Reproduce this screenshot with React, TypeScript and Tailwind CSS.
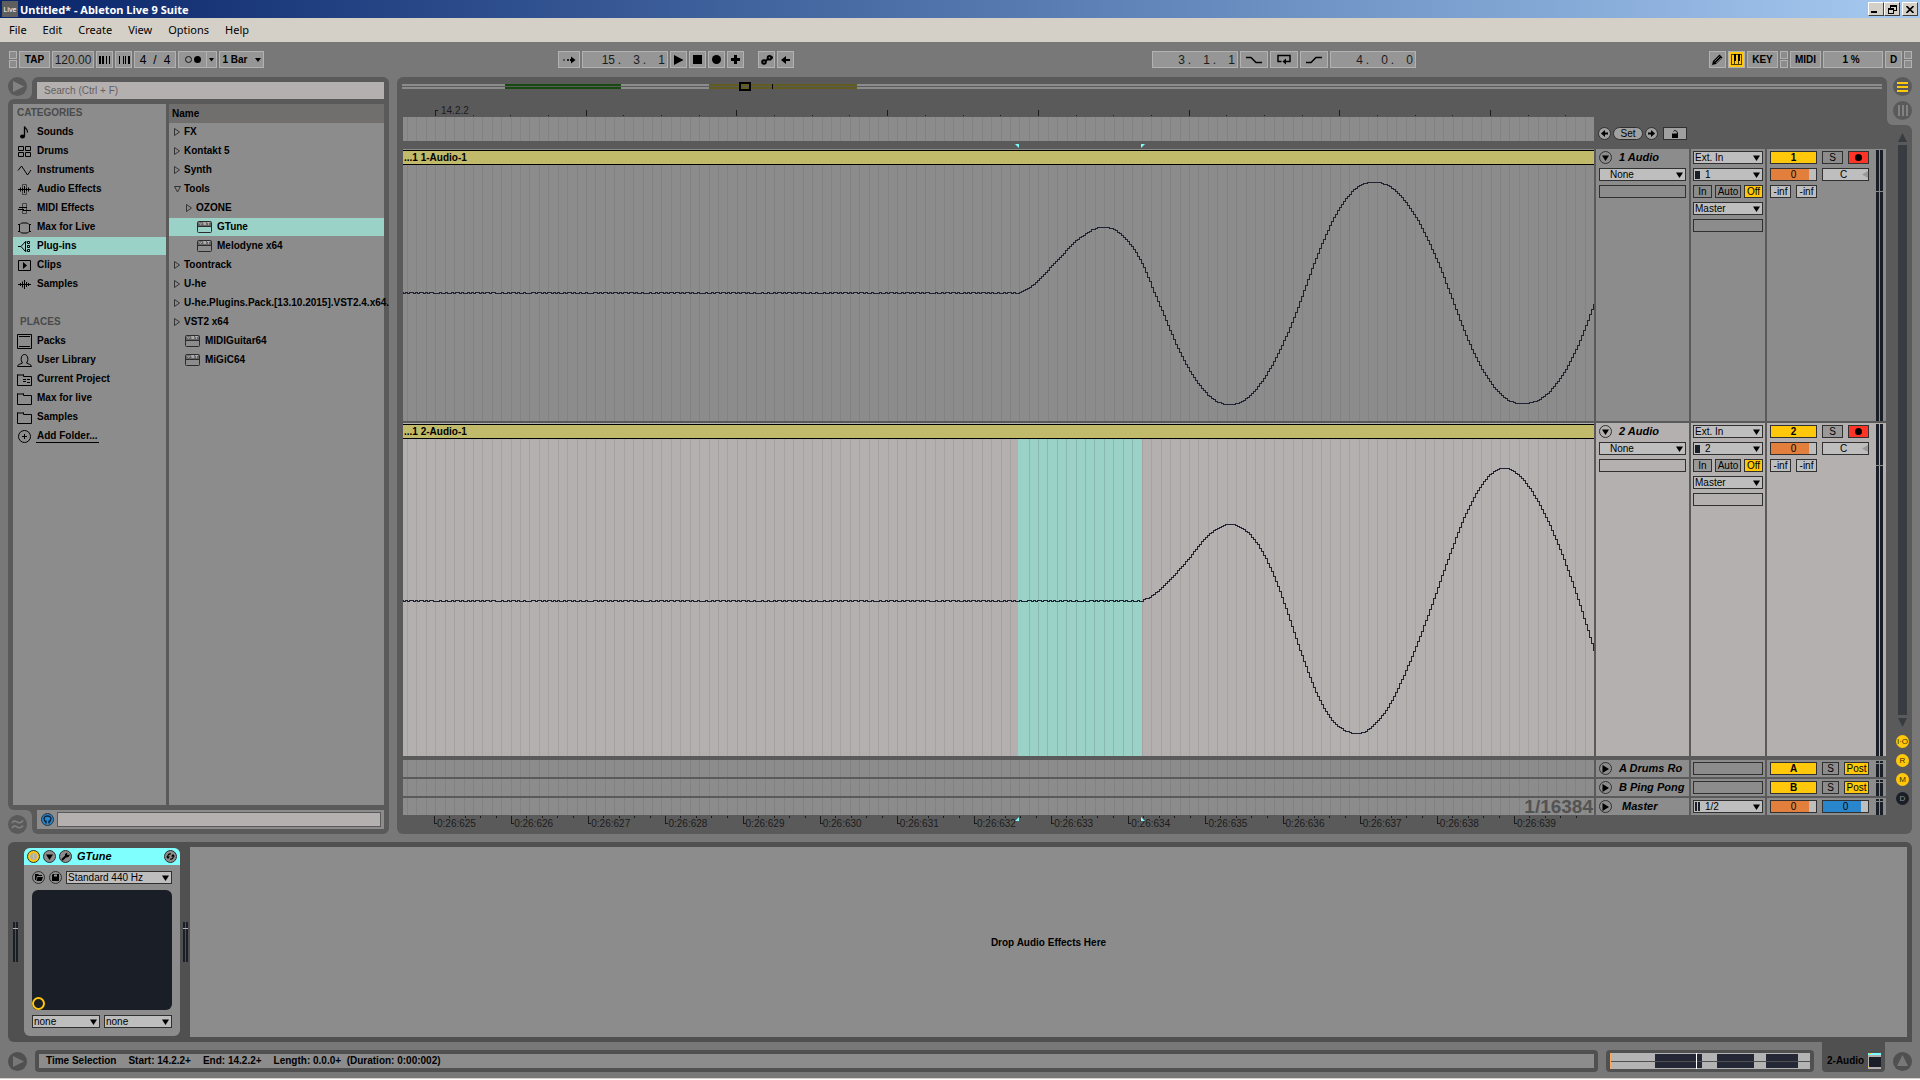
import type { ReactNode } from "react";
import clsx from "clsx";

const LANE_WIDTH = 1191;

const categories = [
  "Sounds",
  "Drums",
  "Instruments",
  "Audio Effects",
  "MIDI Effects",
  "Max for Live",
  "Plug-ins",
  "Clips",
  "Samples",
];

const places = ["Packs", "User Library", "Current Project", "Max for live", "Samples"];

const files = [
  { name: "FX", kind: "closed", depth: 0 },
  { name: "Kontakt 5", kind: "closed", depth: 0 },
  { name: "Synth", kind: "closed", depth: 0 },
  { name: "Tools", kind: "open", depth: 0 },
  { name: "OZONE", kind: "closed", depth: 1 },
  { name: "GTune", kind: "vst", depth: 1 },
  { name: "Melodyne x64", kind: "vst", depth: 1 },
  { name: "Toontrack", kind: "closed", depth: 0 },
  { name: "U-he", kind: "closed", depth: 0 },
  { name: "U-he.Plugins.Pack.[13.10.2015].VST2.4.x64.", kind: "closed", depth: 0 },
  { name: "VST2 x64", kind: "closed", depth: 0 },
  { name: "MIDIGuitar64", kind: "vst", depth: 0 },
  { name: "MiGiC64", kind: "vst", depth: 0 },
];

type Point = [number, number];

const wave1: Point[] = [
  [616, 127], [627, 121], [641, 108], [648, 100], [656, 92], [668, 79], [678, 71], [689, 64],
  [699, 62], [710, 64], [720, 72], [730, 84], [739, 100], [745, 114], [751, 129], [757, 143],
  [775, 185], [790, 212], [808, 233], [826, 239], [845, 231], [866, 203], [886, 162], [899, 128],
  [914, 88], [933, 47], [953, 22], [973, 17], [992, 26], [1012, 52], [1030, 88], [1046, 128],
  [1062, 170], [1080, 207], [1100, 232], [1119, 238], [1140, 231], [1160, 207], [1176, 175], [1191, 136],
];

const wave2: Point[] = [
  [739, 161], [750, 155], [764, 142], [784, 120], [800, 100], [812, 90], [825, 85], [840, 90],
  [855, 107], [870, 137], [885, 178], [900, 222], [915, 259], [930, 283], [950, 294], [966, 289],
  [985, 266], [1005, 224], [1025, 173], [1045, 117], [1062, 74], [1080, 42], [1098, 29], [1116, 37],
  [1136, 66], [1156, 110], [1174, 160], [1191, 214],
];

// Samples a Catmull-Rom curve and holds every value for two pixels, as the clip view does
function stepPath(points: Point[], base: number) {
  let d = `M0 ${base}`;
  let seg = 0;
  for (let x = 0; x <= LANE_WIDTH; x += 2) {
    let y: number;
    if (x < points[0][0]) {
      y = (x * 7) % 23 < 9 || (x * 5) % 31 < 6 ? base + 1 : base;
    } else {
      while (seg < points.length - 2 && x > points[seg + 1][0]) seg++;
      const p1 = points[seg];
      const p2 = points[seg + 1];
      const p0 = points[seg - 1] ?? p1;
      const p3 = points[seg + 2] ?? p2;
      const t = (x - p1[0]) / (p2[0] - p1[0]);
      const w = p2[0] - p1[0];
      const m1 = seg === 0 ? p2[1] - p1[1] : ((p2[1] - p0[1]) / (p2[0] - p0[0])) * w;
      const m2 = p3 === p2 ? p2[1] - p1[1] : ((p3[1] - p1[1]) / (p3[0] - p1[0])) * w;
      y =
        (2 * t ** 3 - 3 * t ** 2 + 1) * p1[1] +
        (t ** 3 - 2 * t ** 2 + t) * m1 +
        (3 * t ** 2 - 2 * t ** 3) * p2[1] +
        (t ** 3 - t ** 2) * m2;
    }
    d += `V${Math.round(y) + 0.5}H${x + 2}`;
  }
  return d;
}

function Grid({ color }: { color: string }) {
  return (
    <svg
      className="absolute inset-0 size-full"
      viewBox={`0 0 ${LANE_WIDTH} 10`}
      preserveAspectRatio="none"
      shapeRendering="crispEdges"
    >
      {Array.from({ length: 126 }, (_, i) => (
        <rect key={i} x={Math.round(4 + i * 9.422)} y="0" width="1" height="10" fill={color} />
      ))}
    </svg>
  );
}

function Caret({ className }: { className?: string }) {
  return (
    <svg className={className} width="7" height="6" viewBox="0 0 7 6">
      <path d="M0 .5h7L3.5 6z" fill="#000" />
    </svg>
  );
}

function Pick({ value, label, className, chip }: { value: string; label: string; className?: string; chip?: "mono" | "stereo" }) {
  return (
    <div className={clsx("relative h-[13px] border border-[#303030] bg-[#bebebe]", className)}>
      <select
        aria-label={label}
        defaultValue={value}
        className={clsx("block h-[11px] w-full appearance-none pr-3 text-[10px] leading-[11px] outline-none", chip ? "pl-[11px]" : "pl-px")}
      >
        <option>{value}</option>
      </select>
      {chip === "mono" && <span className="absolute top-[2px] left-px h-2 w-[5px] bg-[#1a1e26]" />}
      {chip === "stereo" && <span className="absolute top-px left-px h-[9px] w-[5px] border-x-2 border-[#1a1e26]" />}
      <Caret className="pointer-events-none absolute top-[3px] right-[2px]" />
    </div>
  );
}

function Round({ label, children, className }: { label: string; children: ReactNode; className?: string }) {
  return (
    <button
      type="button"
      aria-label={label}
      className={clsx("flex size-[13px] shrink-0 items-center justify-center rounded-full border border-[#303030] text-black", className)}
    >
      {children}
    </button>
  );
}

function Cell({ children, className }: { children?: ReactNode; className?: string }) {
  return (
    <button
      type="button"
      className={clsx("h-[13px] shrink-0 overflow-hidden border border-[#303030] text-center text-[10px] leading-[11px] whitespace-nowrap", className)}
    >
      {children}
    </button>
  );
}

function Blank({ className }: { className?: string }) {
  return <div className={clsx("h-[13px] border border-[#303030]", className)} />;
}

/* Browser and toolbar */

function ToolButton({ children, className, label }: { children?: ReactNode; className?: string; label?: string }) {
  return (
    <button
      type="button"
      aria-label={label}
      className={clsx(
        "flex h-[17px] shrink-0 items-center justify-center border border-[#b2b2b2] text-[10px] leading-none font-bold",
        className ?? "w-[17px]",
        !className?.includes("bg-") && "bg-[#969696]",
      )}
    >
      {children}
    </button>
  );
}

function MiniPair() {
  return (
    <div className="flex w-2 shrink-0 flex-col gap-px">
      <span className="h-2 border border-[#b2b2b2] bg-[#8c8c8c]" />
      <span className="h-2 border border-[#b2b2b2] bg-[#8c8c8c]" />
    </div>
  );
}

function Position({ parts, label }: { parts: string[]; label: string }) {
  return (
    <div
      aria-label={label}
      className="flex h-[17px] w-[86px] shrink-0 items-center justify-end border border-[#b2b2b2] bg-[#969696] pr-[2px] text-[12px] leading-none text-[#1c1c1c]"
    >
      <span className="w-[19px] text-right">{parts[0]}</span>
      <span className="w-[9px] text-center">.</span>
      <span className="w-4 text-right">{parts[1]}</span>
      <span className="w-[9px] text-center">.</span>
      <span className="w-4 text-right">{parts[2]}</span>
    </div>
  );
}

function Toolbar() {
  return (
    <div className="flex h-[35px] items-start px-2 pt-[9px]">
      <div className="flex gap-[2px] pl-px">
        <MiniPair />
        <ToolButton className="w-[31px]">TAP</ToolButton>
        <ToolButton className="w-[42px]">
          <span className="text-[12px] font-normal text-[#1c1c1c]">120.00</span>
        </ToolButton>
        <ToolButton label="Nudge down">
          <svg width="12" height="8" shapeRendering="crispEdges">
            <path d="M0 0h2v8H0zM3 0h2v8H3zM7 0h1v8H7zM10 0h1v8h-1z" />
          </svg>
        </ToolButton>
        <ToolButton label="Nudge up">
          <svg width="12" height="8" shapeRendering="crispEdges">
            <path d="M1 0h1v8H1zM5 0h1v8H5zM7 0h1v8H7zM10 0h2v8h-2z" />
          </svg>
        </ToolButton>
        <ToolButton className="w-[42px]">
          <span className="flex gap-[7px] text-[12px] font-normal">
            <span>4</span>
            <span>/</span>
            <span>4</span>
          </span>
        </ToolButton>
        <div className="flex">
          <ToolButton className="w-[29px]" label="Metronome">
            <svg width="18" height="9">
              <circle cx="4.5" cy="4.5" r="3" fill="none" stroke="#111" />
              <circle cx="13.5" cy="4.5" r="3.5" fill="#000" />
            </svg>
          </ToolButton>
          <ToolButton className="-ml-px w-[11px]" label="Metronome settings">
            <svg width="5" height="4">
              <path d="M0 0h5L2.500 3.500z" />
            </svg>
          </ToolButton>
        </div>
        <ToolButton className="w-[45px] gap-[7px]">
          1 Bar
          <svg width="6" height="4">
            <path d="M0 0h6L3 4z" />
          </svg>
        </ToolButton>
      </div>
      <span className="flex-[294]" />
      <div className="flex gap-[2px]">
        <ToolButton className="w-[22px]" label="Follow">
          <svg width="14" height="8">
            <path d="M1 3h2v2H1z" fill="#555" />
            <path d="M5 3h2v2H5z" fill="#222" />
            <path d="M8 3h1V.5L13.500 4 9 7.500V5H8z" />
          </svg>
        </ToolButton>
        <Position label="Arrangement position" parts={["15", "3", "1"]} />
        <ToolButton label="Play">
          <svg width="11" height="10">
            <path d="M1 0l9.500 5L1 10z" />
          </svg>
        </ToolButton>
        <ToolButton label="Stop">
          <span className="size-[9px] bg-black" />
        </ToolButton>
        <ToolButton label="Record">
          <span className="size-[9px] rounded-full bg-black" />
        </ToolButton>
        <ToolButton label="Overdub">
          <svg width="9" height="9">
            <path d="M3 0h3v3h3v3H6v3H3V6H0V3h3z" />
          </svg>
        </ToolButton>
        <ToolButton className="ml-3 w-[17px]" label="Automation arm">
          <svg width="12" height="10" fill="none" stroke="#000" strokeWidth="2">
            <circle cx="3" cy="7" r="1.800" />
            <circle cx="8.500" cy="2.800" r="1.800" />
            <path d="M4.500 6l2.500-2M10 2.500h2" />
          </svg>
        </ToolButton>
        <ToolButton label="Back to arrangement">
          <svg width="10" height="8">
            <path d="M0 4l5-4v3h4v2H5v3z" />
          </svg>
        </ToolButton>
      </div>
      <span className="flex-[358]" />
      <div className="flex gap-[2px]">
        <Position label="Loop start" parts={["3", "1", "1"]} />
        <ToolButton className="w-[28px]" label="Punch in">
          <svg width="16" height="8" fill="none" stroke="#000" strokeWidth="1.500">
            <path d="M0 1.500h5l5 5h6" />
          </svg>
        </ToolButton>
        <ToolButton className="w-[28px]" label="Loop">
          <svg width="14" height="11" fill="none" stroke="#000" strokeWidth="1.500">
            <path d="M4.500 7.500H1V1.500h12v6H9" />
            <path d="M5.500 7.500L9 4.500v6z" fill="#000" stroke="none" />
          </svg>
        </ToolButton>
        <ToolButton className="w-[28px]" label="Punch out">
          <svg width="16" height="8" fill="none" stroke="#000" strokeWidth="1.500">
            <path d="M0 6.500h5l5-5h6" />
          </svg>
        </ToolButton>
        <Position label="Loop length" parts={["4", "0", "0"]} />
      </div>
      <span className="flex-[293]" />
      <div className="flex gap-[2px]">
        <ToolButton label="Draw mode">
          <svg width="11" height="11">
            <path d="M0 11l1-4L7.500.5 10.500 3.500 4 10z" />
            <path d="M2.500 7.500l5-5M4 9l5-5" stroke="#999" strokeWidth=".7" />
          </svg>
        </ToolButton>
        <ToolButton className="w-[17px] bg-[#ffc80a]" label="Computer MIDI keyboard">
          <svg width="11" height="11" shapeRendering="crispEdges">
            <path d="M.5.5h10v10H.5zM3.500 0v11M7.500 0v11" fill="none" stroke="#4a3a05" />
            <path d="M3 0h2v7H3zM7 0h2v7H7z" fill="#000" />
          </svg>
        </ToolButton>
        <ToolButton className="w-[31px]">KEY</ToolButton>
        <MiniPair />
        <ToolButton className="w-[31px]">MIDI</ToolButton>
        <div className="flex h-[17px] w-[60px] items-center justify-center border border-[#b2b2b2] bg-[#969696] pr-1 text-[10px] leading-none font-bold">
          1 %
        </div>
        <ToolButton>D</ToolButton>
        <MiniPair />
      </div>
    </div>
  );
}

function CategoryIcon({ name }: { name: string }) {
  return (
    <svg width="15" height="15" viewBox="0 0 15 15" fill="none" stroke="#000" className="shrink-0">
      {name === "Sounds" && (
        <>
          <ellipse cx="5.500" cy="11.500" rx="2.500" ry="2" fill="#000" stroke="none" />
          <path d="M7.500 11.500V1.500c1 2.500 3.500 2.500 3 6" strokeWidth="1.300" />
        </>
      )}
      {name === "Drums" && <path d="M1.500 2.500h5v4h-5zM8.500 2.500h5v4h-5zM1.500 8.500h5v4h-5zM8.500 8.500h5v4h-5z" />}
      {name === "Instruments" && <path d="M1 7.500L4.500 3l6 9L14 7" />}
      {name === "Audio Effects" && (
        <>
          <path d="M5.500 2.500h4v10h-4z" stroke="#444" />
          <path d="M1 7.500h13M3.500 5.500v4M5.500 6v3M7.500 4v7M9.500 6v3M11.500 5.500v4" />
        </>
      )}
      {name === "MIDI Effects" && (
        <>
          <path d="M5.500 2.500h4v10h-4z" stroke="#444" />
          <path d="M2 6.500h8M1 8.500h6M6 9.500h8" />
        </>
      )}
      {name === "Max for Live" && <path d="M2.500 4.500v7M12.500 4.500v7M1 4.500h2M12 4.500h2M1 11.500h2M12 11.500h2M3 4.500l1.500-1.500h6L12 4.500M3 11.500l1.500 1.500h6l1.500-1.500" />}
      {name === "Plug-ins" && (
        <>
          <path d="M1 7.500h3l4.500-5v10L4 7.500M8.500 3h1M8.500 12h1" />
          <path d="M10.500 2.500h2v2h-2zM10.500 6.500h2v2h-2zM10.500 10.500h2v2h-2z" />
        </>
      )}
      {name === "Clips" && (
        <>
          <path d="M1.500 2.500h12v10h-12z" />
          <path d="M6 4l4 3.500L6 11z" fill="#000" stroke="none" />
        </>
      )}
      {name === "Samples" && <path d="M1 7.500h13M3.500 6v3M5.500 4.500v6M7.500 3v9M9.500 5v5M11.500 6v3" />}
      {name === "Packs" && <path d="M.5.500h14v14H.500zM2 2.500h11M2 12.500h11" />}
      {name === "User Library" && <path d="M.5 13.500h14c0-2-3-2.500-5-3.500 2-2 2-8.500-2-8.500s-4 6.500-2 8.500c-2 1-5 1.500-5 3.500z" />}
      {(name === "Current Project" || name === "Folder") && <path d="M.5 13.500V2.500h6v2h8v9z" />}
      {(name === "Current Project" || name === "Folder") && <path d="M1 2h5v2H1z" fill="#444" stroke="none" />}
      {name === "Current Project" && <path d="M6 7.500h3M10 7.500h3M6 9.500h3M10 10.500h3" />}
      {name === "Add" && (
        <>
          <circle cx="7.500" cy="7.500" r="6" />
          <path d="M7.500 5v5M5 7.500h5" />
        </>
      )}
    </svg>
  );
}

function VstIcon() {
  return (
    <svg width="15" height="12" className="shrink-0" fill="none">
      <rect x=".5" y=".5" width="14" height="11" rx="1" stroke="#2c2c2c" />
      <path d="M1 1h13v4H1z" fill="#666" />
      <path d="M2 1.500l1.500 2 1.500-2M9 1.500H6.500v1H9v1H6.500M10 1.500h3M11.500 1.500v2.500" stroke="#bbb" strokeWidth=".8" />
      <path d="M1 5.500h13" stroke="#2c2c2c" />
    </svg>
  );
}

function Browser() {
  return (
    <aside className="flex w-[381px] shrink-0 flex-col">
      <div className="flex h-[22px]">
        <div className="w-6 bg-[#5a5a5a]">
          <div className="h-full rounded-br-md bg-[#787878]">
            <button type="button" aria-label="Hide browser" className="flex size-[19px] items-center justify-center rounded-full bg-[#5a5a5a]">
              <svg width="19" height="19">
                <path d="M5 4l11 5.500L5 15z" fill="#828282" />
              </svg>
            </button>
          </div>
        </div>
        <div className="flex-1 rounded-t-md bg-[#5a5a5a] px-[5px] pt-[5px]">
          <input
            type="search"
            aria-label="Search"
            placeholder="Search (Ctrl + F)"
            className="block h-[17px] w-full bg-[#b4b0b0] px-[7px] text-[10px] outline-none placeholder:text-[#626060]"
          />
        </div>
      </div>
      <div className="flex flex-1 gap-[3px] rounded-tl-md rounded-bl-md bg-[#5a5a5a] p-[5px] text-[10px] leading-[18px] font-bold">
        <nav className="w-[153px] bg-[#8c8c8c]">
          <h2 className="h-[19px] pl-1 text-[#4a4a4a]">CATEGORIES</h2>
          {categories.map((name) => (
            <a
              key={name}
              href="#"
              className={clsx("mb-px flex h-[18px] items-center gap-[5px] pl-1", name === "Plug-ins" && "bg-[#9ad2c8]")}
            >
              <CategoryIcon name={name} />
              {name}
            </a>
          ))}
          <h2 className="mt-5 h-[19px] pl-[7px] text-[#4a4a4a]">PLACES</h2>
          {places.map((name, i) => (
            <a key={name} href="#" className="mb-px flex h-[18px] items-center gap-[5px] pl-1">
              <CategoryIcon name={i > 2 ? "Folder" : name} />
              {name}
            </a>
          ))}
          <a href="#" className="flex h-[18px] items-center gap-1 pl-1">
            <CategoryIcon name="Add" />
            <span className="border-b border-black px-px leading-[12px]">Add Folder...</span>
          </a>
        </nav>
        <div className="min-w-0 flex-1 bg-[#8c8c8c]">
          <div className="h-[19px] bg-[#706f6e] pl-[3px] leading-[19px]">Name</div>
          {files.map((f) => (
            <button
              type="button"
              key={f.name}
              className={clsx(
                "mb-px flex h-[18px] w-full items-center text-left whitespace-nowrap",
                f.kind === "vst" ? "gap-[5px]" : "gap-1",
                f.kind === "vst" ? (f.depth ? "pl-7" : "pl-4") : f.depth ? "pl-[17px]" : "pl-[5px]",
                f.name === "GTune" && "bg-[#9ad2c8]",
              )}
            >
              {f.kind === "vst" && <VstIcon />}
              {f.kind === "closed" && (
                <svg width="6" height="8" className="shrink-0" fill="none" stroke="#333">
                  <path d="M.5.500L5.500 4 .5 7.500z" />
                </svg>
              )}
              {f.kind === "open" && (
                <svg width="7" height="7" className="-mr-px shrink-0" fill="none" stroke="#333">
                  <path d="M.5.500h6L3.500 6z" />
                </svg>
              )}
              {f.name}
            </button>
          ))}
        </div>
      </div>
      <div className="flex h-6">
        <div className="w-6 bg-[#5a5a5a]">
          <div className="h-full rounded-tr-md bg-[#787878] pt-[5px]">
            <button type="button" aria-label="Groove pool" className="block size-[19px] rounded-full bg-[#5a5a5a]">
              <svg width="19" height="19" fill="none" stroke="#828282" strokeWidth="1.500">
                <path d="M4 8c2.500-4 4.500-1 6-.500s3 1 5-2M4 13c2.500-4 4.500-1 6-.500s3 1 5-2" />
              </svg>
            </button>
          </div>
        </div>
        <div className="flex-1 rounded-b-md bg-[#5a5a5a] px-[5px] pb-[5px]">
          <div className="flex h-[19px] items-center gap-[3px] bg-[#8c8c8c] pr-[3px] pl-1">
            <Round label="Preview" className="bg-[#2a86cc]">
              <svg width="9" height="9" fill="none" stroke="#0c2038" strokeWidth="1.300">
                <path d="M3 8.500V5.500M6 8.500V5.500M2.500 7C-.5 3 1.500 1 4.500 1s5 2 2 6" />
              </svg>
            </Round>
            <input type="text" aria-label="Preview file" className="h-[15px] min-w-0 flex-1 border border-[#5a5a5a] bg-[#b4b0b0] outline-none" />
          </div>
        </div>
      </div>
    </aside>
  );
}

/* Arrangement */

function Meters({ tick }: { tick?: boolean }) {
  return (
    <div className="relative mt-px ml-auto flex w-[7px] gap-px self-stretch">
      <span className="w-[3px] bg-[#1a1e26]" />
      <span className="w-[3px] bg-[#1a1e26]" />
      <span className={clsx("absolute h-px w-full bg-[#8c8c8c]", tick ? "top-[41px]" : "top-[2px]")} />
    </div>
  );
}

function Track({ number, selected, wave, base, height }: { number: number; selected?: boolean; wave: Point[]; base: number; height: number }) {
  const bg = selected ? "bg-[#b4b0b0]" : "bg-[#8c8c8c]";
  const button = selected ? "bg-[#999]" : "";
  return (
    <section className={clsx("flex gap-[2px]", selected ? "flex-1" : "h-[272px]")}>
      <div className={clsx("flex min-w-0 flex-1 flex-col pt-px", bg)}>
        <div className="h-[15px] border-y border-black bg-[#c0ba6a] pl-px text-[10px] leading-[13px] font-bold">
          ...1 {number}-Audio-1
        </div>
        <div className="relative min-h-0 flex-1">
          <Grid color={selected ? "#a6a2a2" : "#828282"} />
          {selected && (
            <svg className="absolute inset-0 size-full" viewBox="0 0 1191 10" preserveAspectRatio="none" shapeRendering="crispEdges">
              <rect x="615" width="124" height="10" fill="#9ad2c8" />
              {Array.from({ length: 12 }, (_, i) => (
                <rect key={i} x={Math.round(625.5 + i * 9.422)} width="1" height="10" fill="#8ab8b0" />
              ))}
            </svg>
          )}
          <svg
            className="absolute inset-0 size-full"
            viewBox={`0 0 ${LANE_WIDTH} ${height}`}
            preserveAspectRatio="none"
            shapeRendering="crispEdges"
          >
            <path d={stepPath(wave, base)} fill="none" stroke="#1e2232" vectorEffect="non-scaling-stroke" />
          </svg>
        </div>
      </div>
      <div className={clsx("flex w-[93px] flex-col gap-1 px-[3px] pt-[2px]", bg)}>
        <div className="flex h-[13px] items-center gap-[7px]">
          <Round label="Fold track">
            <Caret />
          </Round>
          <span className="text-[11px] leading-none font-bold italic">{number} Audio</span>
        </div>
        <Pick label="Device" value="None" className="[&>select]:pl-[10px]" />
        <Blank />
      </div>
      <div className={clsx("flex w-[74px] flex-col gap-1 px-[2px] pt-[2px]", bg)}>
        <Pick label="Input type" value="Ext. In" />
        <Pick label="Input channel" value={`${number}`} chip="mono" />
        <div className="flex justify-between">
          <Cell className={clsx("w-[19px]", button)}>In</Cell>
          <Cell className={clsx("w-[26px]", button)}>Auto</Cell>
          <Cell className="w-[19px] bg-[#ffc80a]">Off</Cell>
        </div>
        <Pick label="Output" value="Master" />
        <Blank />
      </div>
      <div className={clsx("flex w-[119px] items-start pr-[3px] pl-[3px]", bg)}>
        <div className="flex w-[99px] flex-col gap-1 pt-[2px]">
          <div className="flex gap-[5px]">
            <Cell className="w-[47px] bg-[#ffc80a] font-bold">{number}</Cell>
            <Cell className={clsx("w-[21px]", button)}>S</Cell>
            <Cell className="flex w-[21px] items-center justify-center bg-[#ff3426]">
              <span className="size-[7px] rounded-full bg-black" />
            </Cell>
          </div>
          <div className="flex gap-[5px]">
            <Cell className="w-[47px] bg-[linear-gradient(90deg,#e27f3c_84%,#bebebe_84%)]">0</Cell>
            <Cell className="relative w-[47px] bg-[#bebebe] pr-1">
              C
              <svg width="6" height="8" className="absolute top-[2px] right-0">
                <path d="M6 0v7L0 3.500z" fill="#999" />
              </svg>
            </Cell>
          </div>
          <div className="flex gap-[5px]">
            <Cell className="w-[21px] bg-[#bebebe]">-inf</Cell>
            <Cell className="w-[21px] bg-[#bebebe]">-inf</Cell>
          </div>
        </div>
        <Meters tick />
      </div>
    </section>
  );
}

function BusRow({ name, letter }: { name: string; letter?: string }) {
  return (
    <section className="flex h-[17px] gap-[2px]">
      <div className="relative flex-1 bg-[#8c8c8c]">
        <Grid color="#828282" />
        {!letter && <div className="relative pr-px text-right text-[19px] leading-[17px] font-bold text-[#535353]">1/16384</div>}
      </div>
      <div className="flex w-[93px] items-center gap-[7px] bg-[#8c8c8c] pl-[3px]">
        <Round label={`Unfold ${name}`}>
          <svg width="7" height="8">
            <path d="M.5 0L7 4 .5 8z" />
          </svg>
        </Round>
        <span className={clsx("text-[11px] leading-none font-bold whitespace-nowrap italic", !letter && "pl-[3px]")}>{name}</span>
      </div>
      <div className="w-[74px] bg-[#8c8c8c] px-[2px] pt-[2px]">
        {letter ? <Blank /> : <Pick label="Cue out" value="1/2" chip="stereo" />}
      </div>
      <div className="flex w-[119px] items-center gap-[5px] bg-[#8c8c8c] px-[3px]">
        {letter ? (
          <>
            <Cell className="w-[47px] bg-[#ffc80a] font-bold">{letter}</Cell>
            <Cell className="w-[17px]">S</Cell>
            <Cell className="w-[25px] bg-[#ffc80a]">Post</Cell>
          </>
        ) : (
          <>
            <Cell className="w-[47px] bg-[linear-gradient(90deg,#e27f3c_84%,#bebebe_84%)]">0</Cell>
            <Cell className="w-[47px] bg-[linear-gradient(90deg,#2a86cc_84%,#bebebe_84%)]">0</Cell>
          </>
        )}
        <Meters />
      </div>
    </section>
  );
}

function Arrangement() {
  return (
    <main className="flex min-w-0 flex-1">
      <div className="flex min-w-0 flex-1 flex-col rounded-l-md rounded-tr-md bg-[#5a5a5a] pt-[5px] pr-px pl-[6px]">
        <svg className="-ml-px block h-[9px] w-full" viewBox="0 0 1483 9" preserveAspectRatio="none" shapeRendering="crispEdges">
          <path d="M0 2h1480v2H0zM0 5h1480v2H0z" fill="#8c8c8c" />
          <path d="M103 2h116v2H103zM103 5h116v2H103z" fill="#164a10" />
          <path d="M307 2h148v2H307zM307 5h148v2H307z" fill="#625c1e" />
          <path d="M338 1h10v7h-10z" fill="none" stroke="#000" strokeWidth="2" />
          <path d="M370 2h1v5h-1z" />
        </svg>
        <div className="flex h-[58px]">
          <div className="flex min-w-0 flex-1 flex-col">
            <div className="relative h-[26px]">
              <svg className="absolute inset-0 size-full" viewBox="0 0 1191 26" preserveAspectRatio="none" shapeRendering="crispEdges">
                {Array.from({ length: 31 }, (_, i) => (
                  <rect
                    key={i}
                    x={Math.round(32 + i * 37.68)}
                    y={i % 4 ? 24 : 19}
                    width="1"
                    height={i % 4 ? 1 : 6}
                    fill="#1c1c1c"
                  />
                ))}
                <path d="M32 19h3v1h-3z" fill="#1c1c1c" />
              </svg>
              <span className="relative block pt-[14px] pl-[38px] text-[10px] leading-[12px] text-[#1c1c1c]">14.2.2</span>
            </div>
            <div className="relative h-6 bg-[#8c8c8c]">
              <Grid color="#828282" />
            </div>
            <svg className="block h-2 w-full" viewBox="0 0 1191 8" preserveAspectRatio="none">
              <path d="M612 3h4v4zM738 3h4l-4 4z" fill="#80ffff" />
            </svg>
          </div>
          <div className="flex w-[292px] items-start gap-[2px] pt-9 pl-1">
            <Round label="Previous locator" className="bg-[#a0a0a0]">
              <svg width="7" height="7">
                <path d="M0 3.500L4 0v2.500h3v2H4V7z" />
              </svg>
            </Round>
            <button type="button" className="h-[13px] w-[30px] rounded-full border border-[#303030] bg-[#a0a0a0] text-[10px] leading-[11px]">
              Set
            </button>
            <Round label="Next locator" className="bg-[#a0a0a0]">
              <svg width="7" height="7">
                <path d="M7 3.500L3 0v2.500H0v2h3V7z" />
              </svg>
            </Round>
            <button type="button" aria-label="Lock envelopes" className="ml-[3px] flex h-[13px] w-6 items-center justify-center border border-[#303030] bg-[#a0a0a0]">
              <svg width="8" height="8">
                <path d="M1 3.500h6V8H1z" />
                <path d="M2.500 1.500C3 0 6.500 0 6.500 4" fill="none" stroke="#000" />
              </svg>
            </button>
          </div>
        </div>
        <Track number={1} wave={wave1} base={127} height={256} />
        <div className="h-[2px]" />
        <Track number={2} selected wave={wave2} base={161} height={317} />
        <div className="mt-1 flex flex-col gap-[2px]">
          <BusRow name="A Drums Ro" letter="A" />
          <BusRow name="B Ping Pong" letter="B" />
          <BusRow name="Master" />
        </div>
        <div className="flex h-[19px] pr-[292px]">
          <div className="relative flex flex-1 pt-px pr-[3px] pl-[31px]">
            {Array.from({ length: 15 }, (_, i) => (
              <div key={i} className="relative min-w-0 flex-1">
                <svg className="absolute inset-0 block h-2 w-full" viewBox="0 0 77 8" preserveAspectRatio="none" shapeRendering="crispEdges">
                  <path d="M0 0h1v7h2v1H0zM15 0h1v2h-1zM31 0h1v2h-1zM46 0h1v2h-1zM62 0h1v2h-1z" fill="#1c1c1c" />
                </svg>
                <span className="relative block pt-[2px] pl-[3px] text-[10px] leading-[12px] text-[#1c1c1c]">0:26:{625 + i}</span>
              </div>
            ))}
            <svg className="absolute inset-x-0 top-0 h-2 w-full" viewBox="0 0 1191 8" preserveAspectRatio="none">
              <path d="M616 2v4h-4zM738 2v4h4z" fill="#80ffff" />
            </svg>
          </div>
        </div>
      </div>
      <div className="flex w-[25px] shrink-0 flex-col">
        <div className="bg-[#5a5a5a]">
          <div className="flex h-12 flex-col items-end gap-[5px] rounded-bl-md bg-[#787878]">
            <button type="button" aria-label="Arrangement view" className="flex size-[19px] flex-col items-center justify-center gap-[2px] rounded-full bg-[#5a5a5a]">
              <span className="h-[2px] w-[11px] bg-[#ffc80a]" />
              <span className="h-[2px] w-[11px] bg-[#ffc80a]" />
              <span className="h-[2px] w-[11px] bg-[#ffc80a]" />
            </button>
            <button type="button" aria-label="Session view" className="flex size-[19px] items-center justify-center gap-[2px] rounded-full bg-[#5a5a5a]">
              <span className="h-[11px] w-[2px] bg-[#828282]" />
              <span className="h-[11px] w-[2px] bg-[#828282]" />
              <span className="h-[11px] w-[2px] bg-[#828282]" />
            </button>
          </div>
        </div>
        <div className="flex flex-1 flex-col items-center rounded-r-md bg-[#5a5a5a] pt-2 pb-[29px] pl-[6px]">
          <div className="flex w-full flex-1 flex-col items-center gap-[3px]">
            <svg width="9" height="9">
              <path d="M4.500 0L9 9H0z" fill="#383c40" />
            </svg>
            <div className="w-[9px] flex-1 bg-[#383c40]" />
            <svg width="9" height="9">
              <path d="M4.500 9L9 0H0z" fill="#383c40" />
            </svg>
          </div>
          <div className="mt-2 flex flex-col gap-[6px] text-[8px] leading-none">
            {["I·O", "R", "M", "D"].map((t) => (
              <button
                type="button"
                key={t}
                className={clsx("size-[13px] rounded-full", t === "D" ? "bg-[#1a1e26] text-[#8c8c8c]" : "bg-[#ffc80a] text-[#3a3000]")}
              >
                {t}
              </button>
            ))}
          </div>
        </div>
      </div>
    </main>
  );
}

/* Devices and status */

function ChainMeter() {
  return (
    <div className="relative flex h-10 w-[5px] shrink-0 gap-px">
      <span className="w-[2px] bg-[#1a1e26]" />
      <span className="w-[2px] bg-[#1a1e26]" />
      <span className="absolute top-[6px] h-px w-full bg-[#b4b0b0]" />
    </div>
  );
}

function DevicePanel() {
  return (
    <section className="flex h-[200px] items-center rounded-md rounded-br-none bg-[#505050] p-[5px]">
      <ChainMeter />
      <div className="ml-[6px] flex h-[188px] w-[156px] shrink-0 flex-col overflow-hidden rounded-md bg-[#8c8c8c]">
        <div className="flex h-[17px] items-center gap-[3px] bg-[#80ffff] px-[3px]">
          <Round label="Device on" className="bg-[#ffc80a]">
            <span className="flex size-[7px] items-center justify-center rounded-full bg-[#b4b0a0]">
              <span className="h-[5px] w-px bg-[#ffc80a]" />
            </span>
          </Round>
          <Round label="Unfold" className="bg-[#8c8c8c]">
            <Caret />
          </Round>
          <Round label="Edit plug-in" className="bg-[#8c8c8c]">
            <svg width="9" height="9">
              <path d="M1 8l4-4" stroke="#000" strokeWidth="2" />
              <path d="M4 4.500V2L6.500.5 6 2.500l1 .5 2-.5L7.500 5 5 5.500z" />
            </svg>
          </Round>
          <span className="ml-[2px] flex-1 text-[11px] leading-none font-bold italic">GTune</span>
          <Round label="Hot-swap" className="bg-[#8c8c8c]">
            <svg width="9" height="9" fill="none" stroke="#000" strokeWidth="1.200">
              <path d="M2 6C1 3 3 1.500 5 2M7 3c1 3-1 4.500-3 4" />
              <path d="M0 4.500h4L2 7zM5 4.500h4L7 2z" fill="#000" stroke="none" />
            </svg>
          </Round>
        </div>
        <div className="flex flex-1 flex-col px-2 pt-[6px]">
          <div className="flex items-center gap-1">
            <Round label="Load preset">
              <svg width="8" height="7">
                <path d="M0 0h3l1 1h3v1H2L1 6H0zM2.500 3H8L6.500 7H1.500z" />
              </svg>
            </Round>
            <Round label="Save preset">
              <svg width="7" height="7">
                <path d="M0 1l1-1h6v7H0z" />
                <path d="M2 .5h3v2H2z" fill="#999" />
              </svg>
            </Round>
            <Pick label="Tuning" value="Standard 440 Hz" className="flex-1" />
          </div>
          <div className="mt-[6px] flex h-[120px] items-end rounded-md bg-[#1a1e26]">
            <span className="size-[13px] rounded-full border-2 border-[#ffc80a]" />
          </div>
          <div className="mt-[5px] flex gap-1">
            <Pick label="X parameter" value="none" className="flex-1" />
            <Pick label="Y parameter" value="none" className="flex-1" />
          </div>
        </div>
      </div>
      <div className="mr-[2px] ml-[3px]">
        <ChainMeter />
      </div>
      <div className="flex flex-1 items-center justify-center self-stretch bg-[#8c8c8c] text-[10px] font-bold">
        Drop Audio Effects Here
      </div>
    </section>
  );
}

function StatusBar() {
  return (
    <footer className="flex h-9 items-start">
      <button type="button" aria-label="Show info view" className="mt-[10px] size-[19px] rounded-full bg-[#505050]">
        <svg width="19" height="19">
          <path d="M5 4l11 5.500L5 15z" fill="#787878" />
        </svg>
      </button>
      <div className="mt-2 ml-2 flex-1 rounded-sm bg-[#505050] p-1">
        <div className="flex h-[14px] items-center gap-3 bg-[#8c8c8c] pl-[7px] text-[10px] leading-none font-bold">
          <span>Time Selection</span>
          <span>Start: 14.2.2+</span>
          <span>End: 14.2.2+</span>
          <span>Length: 0.0.0+&nbsp; (Duration: 0:00:002)</span>
        </div>
      </div>
      <div className="mt-2 ml-2 h-[22px] w-[208px] rounded-sm bg-[#505050] px-1 py-[3px]">
        <svg className="block h-4 w-full" viewBox="0 0 200 16" shapeRendering="crispEdges">
          <path d="M0 0h200v16H0z" fill="#b4b4b4" />
          <path d="M45 1h47v14H45zM107 1h37v14h-37zM156 1h32v14h-32z" fill="#242836" />
          <path d="M0 8h200v1H0z" fill="#505050" />
          <path d="M86 0h1v16h-1z" fill="#fff" />
          <path d="M0 0h1v16H0z" fill="#ffa860" />
        </svg>
      </div>
      <button type="button" className="ml-2 flex h-[30px] w-[63px] items-center gap-1 rounded-b-sm bg-[#505050] pl-[5px] text-[10px] leading-none font-bold">
        <span className="pt-2">2-Audio</span>
        <svg width="13" height="16" className="mt-2" shapeRendering="crispEdges">
          <path d="M0 0h13v16H0z" fill="#b4b0b0" />
          <path d="M0 0h13v2H0z" fill="#80ffff" />
          <path d="M1 4h12v10H1z" fill="#1a1e26" />
          <path d="M0 13h1v1H0zM1 0h2v1H1z" fill="#ffc80a" />
        </svg>
      </button>
      <button type="button" aria-label="Hide devices" className="mt-[10px] ml-2 size-[19px] rounded-full bg-[#505050]">
        <svg width="19" height="19">
          <path d="M9.500 3L15 14H4z" fill="#787878" />
        </svg>
      </button>
    </footer>
  );
}

function TitleButton({ label, children }: { label: string; children: ReactNode }) {
  return (
    <button
      type="button"
      aria-label={label}
      className="flex h-[14px] w-4 items-center justify-center border border-t-white border-r-[#404040] border-b-[#404040] border-l-white bg-[#d4d0c8]"
    >
      {children}
    </button>
  );
}

export default function App() {
  return (
    <div className="flex min-h-screen flex-col border-b border-white bg-[#787878] font-['Liberation_Sans',Arial,sans-serif] text-black">
      <header className="font-['Noto_Sans','Open_Sans',sans-serif] text-[11px]">
        <div className="flex h-[18px] items-center bg-linear-to-r from-[#0a246a] to-[#a6caf0] px-[2px] text-white">
          <span className="mr-[2px] flex size-4 items-center justify-center bg-[#5e5e5e] text-[7px] leading-none">Live</span>
          <h1 className="leading-none font-bold">Untitled* - Ableton Live 9 Suite</h1>
          <div className="ml-auto flex">
            <TitleButton label="Minimize">
              <span className="mt-[6px] mr-1 h-[2px] w-[6px] bg-black" />
            </TitleButton>
            <TitleButton label="Restore">
              <svg width="9" height="9" fill="none" stroke="#000" shapeRendering="crispEdges">
                <path d="M2.500 3V.5h6v5H6M2 1h7M.5 3.500h5v5h-5zM0 4h6" />
              </svg>
            </TitleButton>
            <span className="w-[2px]" />
            <TitleButton label="Close">
              <svg width="8" height="7" stroke="#000" strokeWidth="1.600">
                <path d="M.5 0l7 7M7.500 0l-7 7" />
              </svg>
            </TitleButton>
          </div>
        </div>
        <nav className="flex h-6 items-center gap-4 bg-[#d4d0c8] pl-[9px]">
          {["File", "Edit", "Create", "View", "Options", "Help"].map((m) => (
            <a key={m} href="#">
              {m}
            </a>
          ))}
        </nav>
      </header>
      <Toolbar />
      <div className="flex flex-1 gap-2 px-2">
        <Browser />
        <Arrangement />
      </div>
      <div className="mt-2 border-b border-[#d4d0c8] px-2">
        <DevicePanel />
        <StatusBar />
      </div>
    </div>
  );
}
